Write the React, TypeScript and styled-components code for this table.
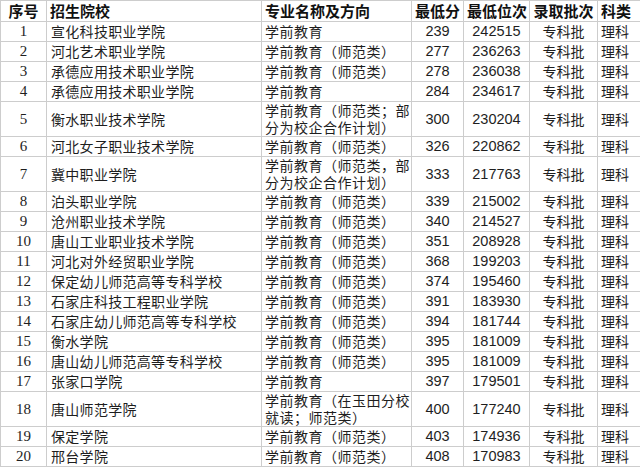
import styled, { createGlobalStyle } from 'styled-components'

interface RowData {
  no: number;
  school: string;
  major: string;
  score: number;
  rank: number;
  tall?: boolean;
}

const rows: RowData[] = [
  { no: 1, school: '宣化科技职业学院', major: '学前教育', score: 239, rank: 242515 },
  { no: 2, school: '河北艺术职业学院', major: '学前教育（师范类）', score: 277, rank: 236263 },
  { no: 3, school: '承德应用技术职业学院', major: '学前教育（师范类）', score: 278, rank: 236038 },
  { no: 4, school: '承德应用技术职业学院', major: '学前教育', score: 284, rank: 234617 },
  { no: 5, school: '衡水职业技术学院', major: '学前教育（师范类；部分为校企合作计划）', score: 300, rank: 230204, tall: true },
  { no: 6, school: '河北女子职业技术学院', major: '学前教育（师范类）', score: 326, rank: 220862 },
  { no: 7, school: '冀中职业学院', major: '学前教育（师范类，部分为校企合作计划）', score: 333, rank: 217763, tall: true },
  { no: 8, school: '泊头职业学院', major: '学前教育（师范类）', score: 339, rank: 215002 },
  { no: 9, school: '沧州职业技术学院', major: '学前教育（师范类）', score: 340, rank: 214527 },
  { no: 10, school: '唐山工业职业技术学院', major: '学前教育（师范类）', score: 351, rank: 208928 },
  { no: 11, school: '河北对外经贸职业学院', major: '学前教育（师范类）', score: 368, rank: 199203 },
  { no: 12, school: '保定幼儿师范高等专科学校', major: '学前教育（师范类）', score: 374, rank: 195460 },
  { no: 13, school: '石家庄科技工程职业学院', major: '学前教育（师范类）', score: 391, rank: 183930 },
  { no: 14, school: '石家庄幼儿师范高等专科学校', major: '学前教育（师范类）', score: 394, rank: 181744 },
  { no: 15, school: '衡水学院', major: '学前教育（师范类）', score: 395, rank: 181009 },
  { no: 16, school: '唐山幼儿师范高等专科学校', major: '学前教育（师范类）', score: 395, rank: 181009 },
  { no: 17, school: '张家口学院', major: '学前教育', score: 397, rank: 179501 },
  { no: 18, school: '唐山师范学院', major: '学前教育（在玉田分校就读；师范类）', score: 400, rank: 177240, tall: true },
  { no: 19, school: '保定学院', major: '学前教育（师范类）', score: 403, rank: 174936 },
  { no: 20, school: '邢台学院', major: '学前教育（师范类）', score: 408, rank: 170983 },
]

const GlobalStyle = createGlobalStyle`
  html, body {
    margin: 0;
    padding: 0;
    background: #ffffff;
    overflow: hidden;
  }
`;

const Sheet = styled.div`
  width: 640px;
  height: 469px;
  overflow: hidden;
  background: #fff;
  font-family: "Noto Sans CJK SC", "Liberation Sans", sans-serif;
  color: #1a1a1a;
`;

const Table = styled.table`
  border-collapse: collapse;
  table-layout: fixed;
  width: 660px;
`;

const HeadRow = styled.tr`
  height: 21px;
`;

const BodyRow = styled.tr<{ $tall?: boolean }>`
  height: ${props => props.$tall ? '35px' : '20px'};
`;

const Head = styled.th<{ $align?: string }>`
  border: 1px solid #cdcdcd;
  padding: 0 3px;
  font-size: 15px;
  font-weight: 700;
  line-height: 18px;
  text-align: ${props => props.$align || 'center'};
  white-space: nowrap;
  overflow: hidden;
  color: #111;
`;

const Cell = styled.td<{ $align?: string; $num?: boolean; $serif?: boolean }>`
  border: 1px solid #cdcdcd;
  padding: 0 3px;
  line-height: 17px;
  vertical-align: middle;
  text-align: ${props => props.$align || 'center'};
  font-family: ${props => props.$serif
    ? '"Liberation Serif", "Noto Sans CJK SC", serif'
    : props.$num ? '"Liberation Sans", sans-serif' : 'inherit'};
  font-size: ${props => props.$serif ? '15px' : props.$num ? '14.5px' : '14px'};
  color: #1e1e1e;
  overflow: hidden;
`;

const SchoolCell = styled(Cell)`
  padding-left: 4px;
  letter-spacing: 0.3px;
  white-space: nowrap;
`;

const MajorCell = styled(Cell)`
  padding-left: 3px;
  padding-right: 1px;
  letter-spacing: 0.5px;
  word-break: break-all;
`;

export default function App() {
  return (
    <Sheet>
      <GlobalStyle />
      <Table>
        <colgroup>
          <col style={{ width: 46 }} />
          <col style={{ width: 215 }} />
          <col style={{ width: 150 }} />
          <col style={{ width: 52 }} />
          <col style={{ width: 66 }} />
          <col style={{ width: 68 }} />
          <col style={{ width: 63 }} />
        </colgroup>
        <thead>
          <HeadRow>
            <Head>序号</Head>
            <Head $align="left">招生院校</Head>
            <Head $align="left">专业名称及方向</Head>
            <Head>最低分</Head>
            <Head>最低位次</Head>
            <Head>录取批次</Head>
            <Head $align="left">科类</Head>
          </HeadRow>
        </thead>
        <tbody>
          {rows.map(r => (
            <BodyRow key={r.no} $tall={r.tall}>
              <Cell $serif>{r.no}</Cell>
              <SchoolCell $align="left">{r.school}</SchoolCell>
              <MajorCell $align="left">{r.major}</MajorCell>
              <Cell $num>{r.score}</Cell>
              <Cell $num>{r.rank}</Cell>
              <Cell>专科批</Cell>
              <Cell $align="left">理科</Cell>
            </BodyRow>
          ))}
        </tbody>
      </Table>
    </Sheet>
  );
}
